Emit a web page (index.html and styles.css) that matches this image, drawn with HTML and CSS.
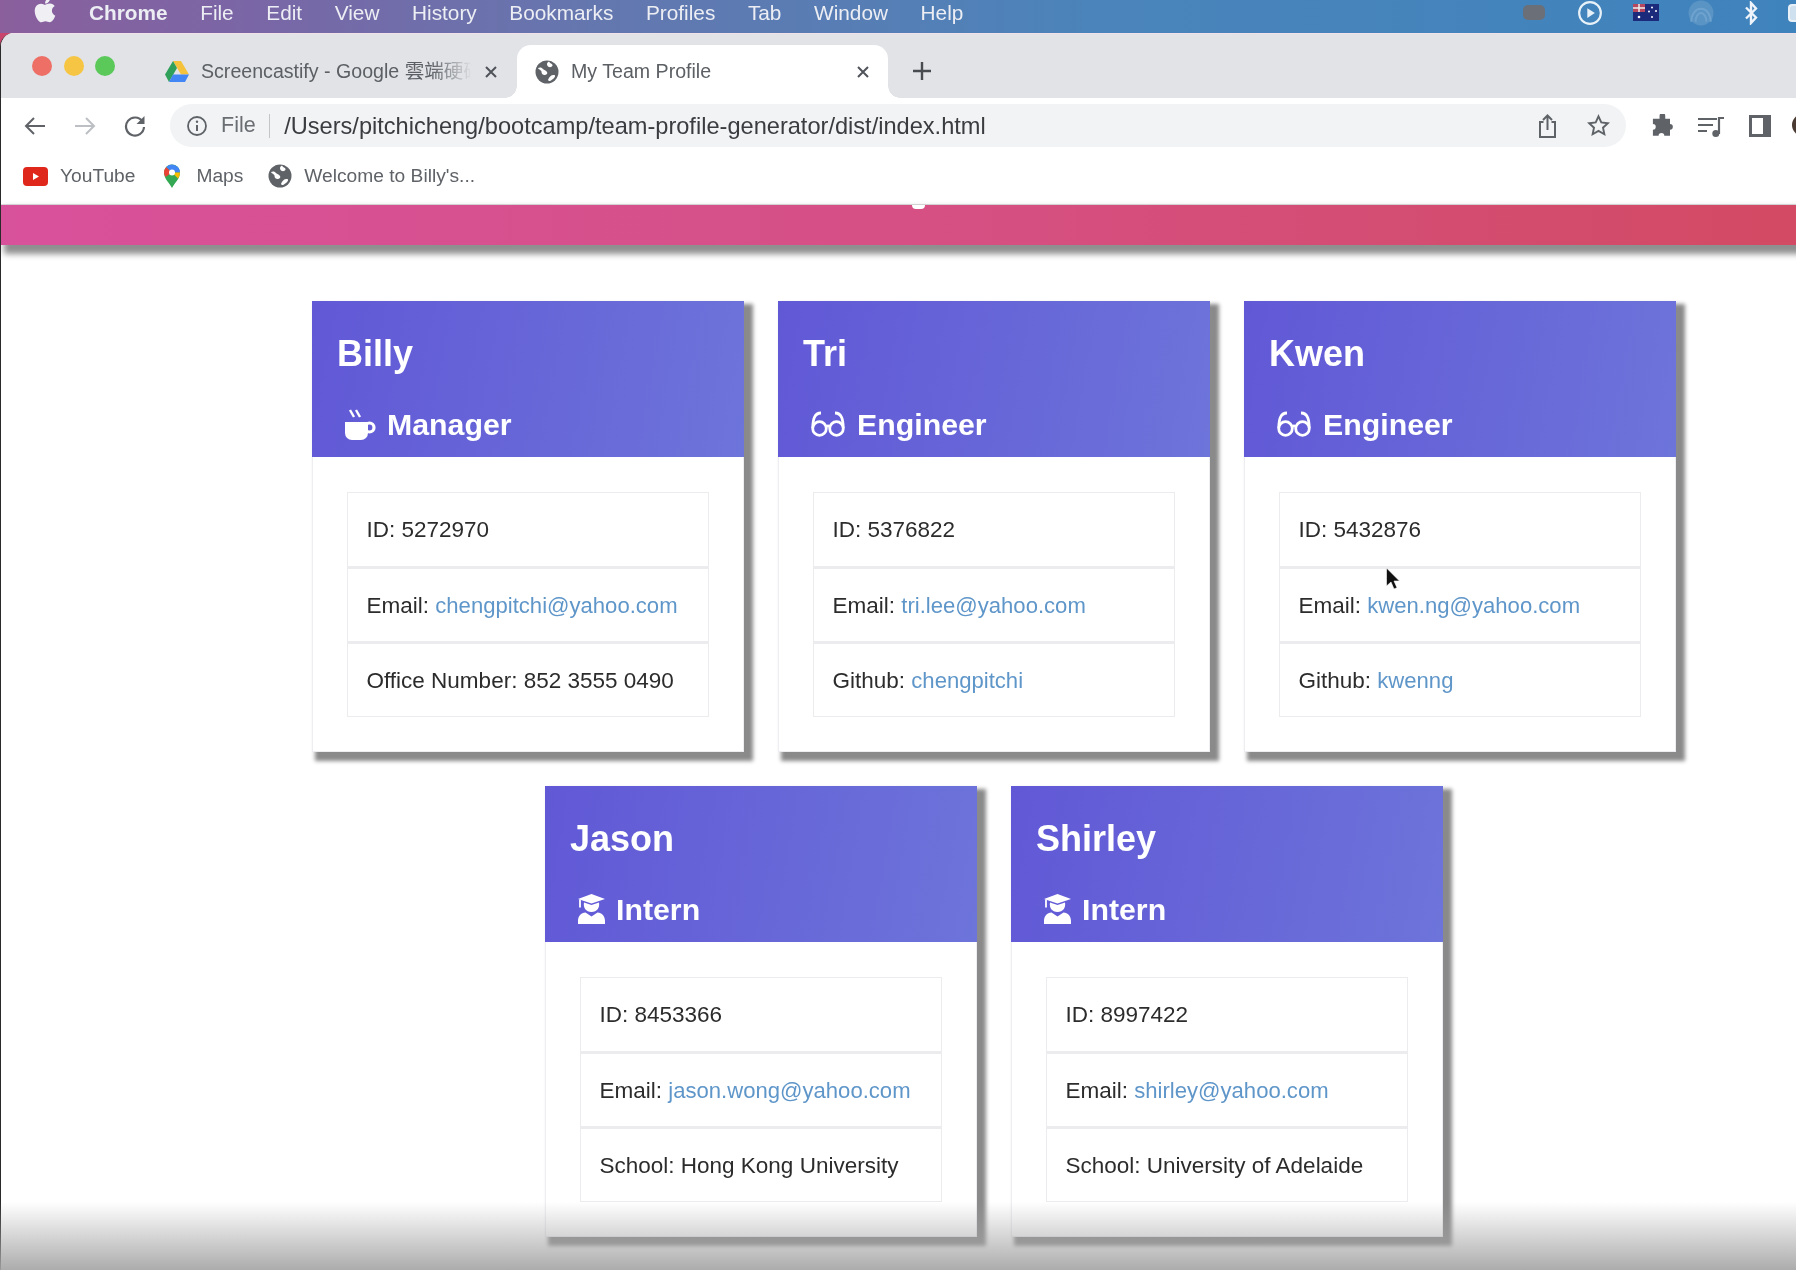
FILE: index.html
```html
<!DOCTYPE html>
<html lang="en">
<head>
<meta charset="utf-8">
<title>My Team Profile</title>
<link rel="stylesheet" href="styles.css">
</head>
<body>
<svg class="defs" width="0" height="0" aria-hidden="true">
  <symbol id="globe" viewBox="0 0 24 24">
    <circle cx="12" cy="12" r="11.5" fill="#5f6368"/>
    <path d="M3 8c2-1 4-.5 5 1s3 1 4 3-1 3-2.500 3-3-1-3-3-2.500-2-3.500-4zM14 1.500c1 2 3 2 3.500 3.500s-2 2.500-3.500 2-2-2-2-3 1-2 2-2.500zM13 20c1-3 3-5 5.500-5s2 2-.5 4-4 3-5 1z" fill="#fff"/>
  </symbol>
  <symbol id="close" viewBox="0 0 14 14">
    <path d="M2 2l10 10M12 2L2 12" stroke="#50545a" stroke-width="2" fill="none"/>
  </symbol>
  <symbol id="mug" viewBox="0 0 31 31">
    <path d="M0 13h23v11a7 7 0 0 1-7 7H7a7 7 0 0 1-7-7z" fill="#fff"/>
    <circle cx="24.500" cy="18.500" r="4.500" fill="none" stroke="#fff" stroke-width="3.200"/>
    <path d="M5 1l4 7M11 1l4 7" stroke="#fff" stroke-width="2.400" fill="none"/>
  </symbol>
  <symbol id="glasses" viewBox="0 0 34 26">
    <g fill="none" stroke="#fff" stroke-width="2.800">
      <circle cx="8.500" cy="17.500" r="6.800"/>
      <circle cx="25.500" cy="17.500" r="6.800"/>
      <path d="M15 16c1-1.500 3-1.500 4 0M1.700 17C2 9 3 2 10 2M32.300 17C32 9 31 2 24 2"/>
    </g>
  </symbol>
  <symbol id="grad" viewBox="0 0 27 30">
    <path d="M0 5L13.500 0 27 5 13.500 9.500z" fill="#fff"/>
    <path d="M6 8.500l7.500 2.500L21 8.500c1 5-2 9.500-7.500 9.500S5 13.500 6 8.500z" fill="#fff"/>
    <path d="M2 5.500v8" stroke="#fff" stroke-width="1.800"/>
    <path d="M0 30v-3c0-5 3-8 7.500-8.500l6 4 6-4C24 19 27 22 27 27v3z" fill="#fff"/>
  </symbol>
</svg>

<div class="page">
  <header class="menubar">
    <svg class="apple" viewBox="0 0 384 512"><path fill="#f0f0f4" d="M318.700 268.700c-.2-36.700 16.400-64.400 50-84.800-18.800-26.900-47.200-41.700-84.700-44.600-35.500-2.800-74.300 20.700-88.500 20.700-15 0-49.400-19.700-76.400-19.700C63.300 141.200 4 184.800 4 273.500q0 39.300 14.400 81.200c12.800 36.700 59 126.700 107.200 125.200 25.200-.6 43-17.900 75.800-17.900 31.800 0 48.300 17.900 76.400 17.900 48.600-.7 90.400-82.500 102.600-119.300-65.200-30.700-61.700-90-61.700-91.900zm-56.600-164.200c27.300-32.400 24.800-61.900 24-72.500-24.100 1.400-52 16.400-67.900 34.900-17.500 19.800-27.800 44.300-25.600 71.900 26.100 2 49.900-11.400 69.500-34.300z"/></svg>
    <nav class="menu">
      <span class="menu-app">Chrome</span>
      <span>File</span><span>Edit</span><span>View</span><span>History</span><span>Bookmarks</span><span>Profiles</span><span>Tab</span><span>Window</span><span>Help</span>
    </nav>
    <div class="status">
      <span class="status-cam"></span>
      <svg class="status-icon" viewBox="0 0 24 24"><circle cx="12" cy="12" r="10" fill="none" stroke="#e8f1f8" stroke-width="2"/><path d="M9.500 7.500l7 4.500-7 4.500z" fill="#e8f1f8"/></svg>
      <svg class="status-flag" viewBox="0 0 26 17"><rect width="26" height="17" fill="#1c2a7c"/><rect width="12" height="8" fill="#b5485f"/><path d="M0 4h12M6 0v8" stroke="#eee" stroke-width="1.500"/><circle cx="6" cy="13" r="1.300" fill="#fff"/><circle cx="19" cy="3.500" r="1" fill="#fff"/><circle cx="23" cy="7" r="1" fill="#fff"/><circle cx="19" cy="13" r="1" fill="#fff"/><circle cx="16" cy="7.500" r="1" fill="#fff"/></svg>
      <svg class="status-icon" viewBox="0 0 24 24"><circle cx="12" cy="12" r="11.500" fill="#5a94c4"/><g fill="none" stroke="#6fa3cf" stroke-width="1.800"><path d="M3 20a9 12 0 0 1 18 0"/><path d="M7 20a5 8 0 0 1 10 0"/></g></svg>
      <svg class="status-bt" viewBox="0 0 14 24"><path d="M2 6.500l10 10L7 22V2l5 5.500-10 10" fill="none" stroke="#eef4fa" stroke-width="2.400"/></svg>
      <span class="status-battery"></span>
    </div>
  </header>

  <div class="window">
    <div class="tabstrip">
      <div class="lights">
        <span class="light light-red"></span>
        <span class="light light-yellow"></span>
        <span class="light light-green"></span>
      </div>
      <div class="tab tab-idle">
        <svg class="drive" viewBox="0 0 24 21"><path d="M8 0h8l8 13.500h-8z" fill="#f5c33b"/><path d="M8 0l4 7-8 14-4-7.500z" fill="#2fa05a"/><path d="M4 21l4-7.500h16L20 21z" fill="#4285f4"/></svg>
        <span class="tab-title tab-title-fade">Screencastify - Google 雲端硬碟</span>
        <svg class="tab-close"><use href="#close"/></svg>
      </div>
      <div class="tab tab-active">
        <svg class="fav"><use href="#globe"/></svg>
        <span class="tab-title">My Team Profile</span>
        <svg class="tab-close"><use href="#close"/></svg>
      </div>
      <svg class="newtab" viewBox="0 0 20 20"><path d="M10 1v18M1 10h18" stroke="#484b50" stroke-width="2.400"/></svg>
    </div>

    <div class="toolbar">
      <svg class="tool" viewBox="0 0 22 22"><path d="M21 11H2M10 3l-8 8 8 8" fill="none" stroke="#5f6368" stroke-width="2"/></svg>
      <svg class="tool" viewBox="0 0 22 22"><path d="M1 11h19M12 3l8 8-8 8" fill="none" stroke="#bcbfc3" stroke-width="2"/></svg>
      <svg class="tool" viewBox="0 0 22 22"><path d="M18.500 6.500A9 9 0 1 0 20 12" fill="none" stroke="#5f6368" stroke-width="2.200"/><path d="M20.500 1v8h-8z" fill="#5f6368"/></svg>
      <div class="omnibox">
        <svg class="info" viewBox="0 0 20 20"><circle cx="10" cy="10" r="9" fill="none" stroke="#5f6368" stroke-width="1.800"/><path d="M10 9v6" stroke="#5f6368" stroke-width="2"/><circle cx="10" cy="5.800" r="1.200" fill="#5f6368"/></svg>
        <span class="omni-scheme">File</span>
        <span class="omni-sep"></span>
        <span class="omni-url">/Users/pitchicheng/bootcamp/team-profile-generator/dist/index.html</span>
        <svg class="omni-action omni-share" viewBox="0 0 22 26"><path d="M7 9H3.500v15h15V9H15" fill="none" stroke="#5f6368" stroke-width="2"/><path d="M11 17V3M6.500 7L11 2.500 15.500 7" fill="none" stroke="#5f6368" stroke-width="2"/></svg>
        <svg class="omni-action" viewBox="0 0 24 24"><path d="M12 2.500l2.900 6.300 6.900.8-5.100 4.700 1.400 6.800-6.100-3.400-6.100 3.400 1.400-6.800-5.100-4.700 6.900-.8z" fill="none" stroke="#5f6368" stroke-width="2"/></svg>
      </div>
      <svg class="ext ext-first" viewBox="0 0 24 24"><path d="M9 2a3 3 0 0 1 6 0v3h5v5.500a3 3 0 0 1 0 6V23h-6a3 3 0 0 0-6 0H2v-6.500a3 3 0 0 0 0-6V5h7z" fill="#5f6368" transform="translate(1 0) scale(.95)"/></svg>
      <svg class="ext ext-media" viewBox="0 0 28 24"><path d="M1 5h19M1 11h15M1 17h9" stroke="#5f6368" stroke-width="2.200"/><path d="M22 20V4h5" fill="none" stroke="#5f6368" stroke-width="2.200"/><circle cx="18.800" cy="19.500" r="3.500" fill="#5f6368"/></svg>
      <svg class="ext" viewBox="0 0 24 24"><path d="M1 1h22v22H1z" fill="#5f6368"/><path d="M4 4h11v16H4z" fill="#fff"/></svg>
      <span class="avatar"></span>
    </div>

    <div class="bookmarks">
      <div class="bm">
        <svg class="bm-yt" viewBox="0 0 25 19"><rect width="25" height="19" rx="4" fill="#e0271b"/><path d="M10 6l6 3.500-6 3.500z" fill="#fff"/></svg>
        <span>YouTube</span>
      </div>
      <div class="bm">
        <svg class="bm-icon" viewBox="0 0 24 24"><path d="M12 24C9 18 4 15 4 8.500a8 8 0 0 1 16 0C20 15 15 18 12 24z" fill="#34a853"/><path d="M4 8.500A8 8 0 0 1 6.300 3L12 8.500 5.500 13C4.500 11.500 4 10 4 8.500z" fill="#ea4335"/><path d="M6.300 3A8 8 0 0 1 20 8.500h-8z" fill="#4285f4"/><path d="M20 8.500c0 2.500-1 4.500-2 6L12 8.500z" fill="#fbbc04"/><circle cx="12" cy="8.500" r="3" fill="#fff"/></svg>
        <span>Maps</span>
      </div>
      <div class="bm">
        <svg class="bm-icon"><use href="#globe"/></svg>
        <span>Welcome to Billy's...</span>
      </div>
    </div>

    <div class="banner"><span class="banner-tail"></span></div>

    <main class="team">
      <article class="card">
        <header class="card-head">
          <h2 class="card-name">Billy</h2>
          <h3 class="card-role"><svg class="role-mug"><use href="#mug"/></svg>Manager</h3>
        </header>
        <ul class="facts">
          <li>ID: 5272970</li>
          <li>Email: <a href="#">chengpitchi@yahoo.com</a></li>
          <li>Office Number: 852 3555 0490</li>
        </ul>
      </article>
      <article class="card">
        <header class="card-head">
          <h2 class="card-name">Tri</h2>
          <h3 class="card-role"><svg class="role-glasses"><use href="#glasses"/></svg>Engineer</h3>
        </header>
        <ul class="facts">
          <li>ID: 5376822</li>
          <li>Email: <a href="#">tri.lee@yahoo.com</a></li>
          <li>Github: <a href="#">chengpitchi</a></li>
        </ul>
      </article>
      <article class="card">
        <header class="card-head">
          <h2 class="card-name">Kwen</h2>
          <h3 class="card-role"><svg class="role-glasses"><use href="#glasses"/></svg>Engineer</h3>
        </header>
        <ul class="facts">
          <li>ID: 5432876</li>
          <li>Email: <a href="#">kwen.ng@yahoo.com</a></li>
          <li>Github: <a href="#">kwenng</a></li>
        </ul>
      </article>
      <article class="card">
        <header class="card-head">
          <h2 class="card-name">Jason</h2>
          <h3 class="card-role"><svg class="role-grad"><use href="#grad"/></svg>Intern</h3>
        </header>
        <ul class="facts">
          <li>ID: 8453366</li>
          <li>Email: <a href="#">jason.wong@yahoo.com</a></li>
          <li>School: Hong Kong University</li>
        </ul>
      </article>
      <article class="card">
        <header class="card-head">
          <h2 class="card-name">Shirley</h2>
          <h3 class="card-role"><svg class="role-grad"><use href="#grad"/></svg>Intern</h3>
        </header>
        <ul class="facts">
          <li>ID: 8997422</li>
          <li>Email: <a href="#">shirley@yahoo.com</a></li>
          <li>School: University of Adelaide</li>
        </ul>
      </article>
    </main>
  </div>

  <svg class="cursor" viewBox="0 0 14 24"><path d="M1 1v18l4.500-4 3 7 3-1.300-3-6.700H14z" fill="#111" stroke="#fff" stroke-width=".6"/></svg>
  <div class="fade"></div>
</div>
</body>
</html>
```

FILE: styles.css
```css
* { box-sizing: border-box; }

html, body {
  margin: 0;
  height: 1270px;
  overflow: hidden;
  background: #fff;
}

.defs { position: absolute; }

.page {
  position: relative;
  width: 1796px;
  height: 1270px;
  overflow: hidden;
  font-family: "Liberation Sans", Arial, "Noto Sans CJK TC", sans-serif;
  background: linear-gradient(90deg, #c9456e 0, #c9456e 30px, #fff 30px);
  filter: blur(0.7px);
}

/* macOS menu bar */
.menubar {
  height: 33px;
  display: flex;
  align-items: center;
  padding: 0 0 8px 34px;
  background: linear-gradient(90deg, #8a5f9c 0, #7a66a6 250px, #6477af 600px, #4a84ba 1100px, #3f83bd 1796px);
  color: #eceef4;
  font-size: 20.8px;
}

.apple { width: 22px; height: 28px; margin-top: -6px; }

.menu { display: flex; gap: 32.600px; margin-left: 33px; }
.menu-app { font-weight: 700; }

.status {
  margin-left: auto;
  display: flex;
  align-items: center;
  height: 25px;
}

.status-cam {
  width: 22px;
  height: 15px;
  border-radius: 5px;
  background: #6a6f78;
  margin-right: 32px;
}
.status-icon { width: 26px; height: 26px; margin-right: 30px; }
.status-flag { width: 26px; height: 17px; margin-right: 29px; }
.status-bt { width: 14px; height: 24px; margin-right: 30px; }
.status-battery {
  width: 8px;
  height: 18px;
  border: 2px solid #e8f1f8;
  border-right: 0;
  border-radius: 4px 0 0 4px;
  background: #cfe0ee;
}

/* Browser window */
.window {
  height: 1237px;
  background: #fff;
  border-left: 1px solid #2a2a2a;
  border-top-left-radius: 14px;
  overflow: hidden;
}

.tabstrip {
  height: 65px;
  display: flex;
  align-items: flex-end;
  padding-left: 31px;
  background: #e1e3e7;
  border-top: 1px solid #f1e2ea;
}

.lights {
  align-self: flex-start;
  display: flex;
  gap: 11.500px;
  margin-top: 22px;
}
.light { width: 20px; height: 20px; border-radius: 50%; }
.light-red { background: #ee6f66; }
.light-yellow { background: #f6c544; }
.light-green { background: #5bc95a; }

.tab {
  height: 53px;
  display: flex;
  align-items: center;
  gap: 12px;
  font-size: 19.600px;
  color: #5c6064;
}

.tab-idle { width: 402px; padding: 0 19px 0 50px; }
.tab-active {
  position: relative;
  width: 371px;
  padding: 0 18px;
  background: #fff;
  border-radius: 14px 14px 0 0;
}
.tab-active::before,
.tab-active::after {
  content: "";
  position: absolute;
  bottom: 0;
  width: 12px;
  height: 12px;
}
.tab-active::before {
  left: -12px;
  background: radial-gradient(circle at 0 0, transparent 11.500px, #fff 12px);
}
.tab-active::after {
  right: -12px;
  background: radial-gradient(circle at 100% 0, transparent 11.500px, #fff 12px);
}

.tab-title { flex: 1; min-width: 0; height: 24px; line-height: 22px; white-space: nowrap; overflow: hidden; }
.tab-title-fade {
  -webkit-mask-image: linear-gradient(90deg, #000 85%, transparent);
  mask-image: linear-gradient(90deg, #000 85%, transparent);
}
.tab-close { width: 14px; height: 14px; flex: none; }
.drive { width: 24px; height: 21px; flex: none; }
.fav { width: 24px; height: 24px; flex: none; }

.newtab { width: 20px; height: 20px; margin: 0 0 17px 24px; }

.toolbar {
  height: 55px;
  display: flex;
  align-items: flex-start;
  padding: 6px 0 0 23px;
  gap: 28px;
  overflow: hidden;
}
.tool { width: 22px; height: 22px; margin-top: 11px; flex: none; }

.omnibox {
  width: 1456px;
  height: 43px;
  flex: none;
  margin: 0 -3px 0 -4px;
  display: flex;
  align-items: center;
  padding: 0 16px 0 17px;
  background: #f1f3f4;
  border-radius: 22px;
  font-size: 21.500px;
  color: #3a3c40;
}
.info { width: 20px; height: 20px; flex: none; }
.omni-scheme { margin-left: 14px; color: #6a6d72; }
.omni-sep { width: 1.500px; height: 24px; margin: 0 14px 0 13px; background: #c3c5c9; }
.omni-url { font-size: 23.600px; line-height: 30px; padding-top: 1px; }
.omni-action { width: 23px; height: 23px; flex: none; margin-left: 28px; }
.omni-share { margin-left: auto; height: 26px; }

.ext { width: 24px; height: 24px; margin-top: 10px; flex: none; margin-left: -5px; }
.ext-first { margin-left: -1px; }
.ext-media { width: 28px; }
.avatar {
  width: 22px;
  height: 22px;
  flex: none;
  margin: 10px 0 0 -8px;
  border-radius: 50%;
  background: #4a3a32;
}

.bookmarks {
  height: 52px;
  display: flex;
  align-items: center;
  gap: 25px;
  padding: 0 0 5px 22px;
  font-size: 19.200px;
  color: #5f6368;
  border-bottom: 1px solid #ddd;
}
.bm { display: flex; align-items: center; gap: 12px; }
.bm-yt { width: 25px; height: 19px; }
.bm-icon { width: 24px; height: 24px; }

.banner {
  position: relative;
  height: 40px;
  background: linear-gradient(90deg, #d8519b 0, #d65085 900px, #d24a63 1796px);
  box-shadow: 6px 6px 6px 3px #8f8f8f;
}
.banner-tail {
  position: absolute;
  left: 911px;
  top: 0;
  width: 13px;
  height: 4px;
  background: #fff;
  border-radius: 0 0 7px 7px;
}

/* Team cards */
.team {
  width: 1364px;
  margin: 56px 0 0 311px;
  display: flex;
  flex-wrap: wrap;
  justify-content: center;
  gap: 34px;
}

.card {
  width: 432px;
  height: 451px;
  background: #fff;
  border: 1px solid #eeeef2;
  box-shadow: 6px 6px 4px 3px #8a8a8a;
}

.card-head {
  height: 156px;
  margin: -1px -1px 0;
  padding: 33px 0 0 25px;
  color: #fff;
  background: linear-gradient(100deg, #6158d6, #6d74da);
}

.card-name {
  margin: 0;
  font-size: 36px;
  line-height: 40px;
  font-weight: 700;
}

.card-role {
  display: flex;
  align-items: center;
  gap: 11px;
  margin: 33px 0 0;
  padding-left: 8px;
  font-size: 30.300px;
  line-height: 36px;
  font-weight: 700;
}
.role-mug { width: 31px; height: 31px; margin-top: -2px; }
.role-glasses { width: 34px; height: 26px; margin-top: -2px; margin-right: 1px; }
.role-grad { width: 27px; height: 30px; margin-top: -2px; }

.facts {
  list-style: none;
  margin: 35px 34px 0;
  padding: 0;
  font-size: 22.500px;
  color: #2c2c2c;
}
.facts li {
  height: 75px;
  display: flex;
  align-items: center;
  white-space: pre;
  padding: 1px 0 0 18.500px;
  border: 1.500px solid #ececef;
}
.facts li + li { border-top-width: 2px; }
.facts a { font-size: 22.100px; color: #5f96c9; text-decoration: none; }

/* Overlays */
.cursor {
  position: absolute;
  left: 1385px;
  top: 567px;
  width: 15px;
  height: 24px;
}

.fade {
  position: absolute;
  left: 0;
  right: 0;
  bottom: 0;
  height: 68px;
  background: linear-gradient(rgba(165,165,165,0), rgba(165,165,165,.92));
}
```
